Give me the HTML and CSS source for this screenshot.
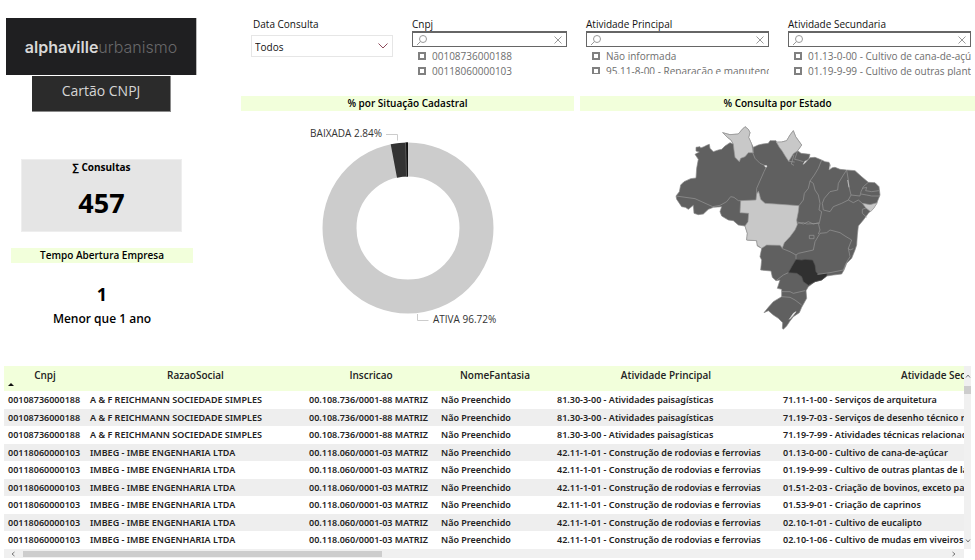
FILE: index.html
```html
<!DOCTYPE html>
<html lang="pt-BR">
<head>
<meta charset="utf-8">
<title>Cartão CNPJ</title>
<link rel="stylesheet" href="styles.css">
</head>
<body>
<svg class="defs" width="0" height="0" aria-hidden="true">
  <symbol id="lens" viewBox="0 0 12 12"><circle cx="7" cy="5" r="3.5"/><path d="M4.5 7.5 1 11"/></symbol>
  <symbol id="cross" viewBox="0 0 8 8"><path d="m.5.5 7 7m0-7-7 7"/></symbol>
</svg>
<div class="top">
  <aside class="side">
    <div class="logo"><strong>alphaville</strong><span>urbanismo</span></div>
    <h1 class="page-title">Cartão CNPJ</h1>
    <section class="card">
      <h2>∑ Consultas</h2>
      <p>457</p>
    </section>
    <section class="age">
      <h2 class="band">Tempo Abertura Empresa</h2>
      <p class="age-value">1</p>
      <p class="age-text">Menor que 1 ano</p>
    </section>
  </aside>
  <main class="content">
    <form class="filters">
      <div class="filter">
        <label for="data">Data Consulta</label>
        <div class="select">
          <select id="data"><option>Todos</option></select>
          <svg class="chevron" viewBox="0 0 10 6"><path d="m.5.5 4.5 4.5L9.5.5"/></svg>
        </div>
      </div>
      <div class="filter">
        <label for="cnpj">Cnpj</label>
        <div class="search">
          <svg class="lens"><use href="#lens"/></svg>
          <input id="cnpj" type="text">
          <button type="button" aria-label="Limpar"><svg><use href="#cross"/></svg></button>
        </div>
        <div class="options">
          <label><input type="checkbox">00108736000188</label>
          <label><input type="checkbox">00118060000103</label>
        </div>
      </div>
      <div class="filter">
        <label for="principal">Atividade Principal</label>
        <div class="search">
          <svg class="lens"><use href="#lens"/></svg>
          <input id="principal" type="text">
          <button type="button" aria-label="Limpar"><svg><use href="#cross"/></svg></button>
        </div>
        <div class="options options-short">
          <label><input type="checkbox">Não informada</label>
          <label><input type="checkbox">95.11-8-00 - Reparação e manutenção</label>
        </div>
      </div>
      <div class="filter">
        <label for="secundaria">Atividade Secundaria</label>
        <div class="search">
          <svg class="lens"><use href="#lens"/></svg>
          <input id="secundaria" type="text">
          <button type="button" aria-label="Limpar"><svg><use href="#cross"/></svg></button>
        </div>
        <div class="options">
          <label><input type="checkbox">01.13-0-00 - Cultivo de cana-de-açúcar</label>
          <label><input type="checkbox">01.19-9-99 - Cultivo de outras plantas</label>
        </div>
      </div>
    </form>
    <div class="charts">
      <section>
        <h2 class="band">% por Situação Cadastral</h2>
        <svg class="donut" viewBox="241 110 333 230">
          <circle cx="408" cy="228" r="68.5" fill="none" stroke="#ccc" stroke-width="34"/>
          <path fill="#333" d="M408 142.500A85.500 85.500 0 0 0 390.700 144.300L397 177.700A51.500 51.500 0 0 1 408 176.500Z"/>
          <path fill="#111" d="M408 142.500h-2l.8 34h1.200Z"/>
          <path fill="none" stroke="#666" stroke-width=".7" d="M405.500 142.500l1 34"/>
          <path fill="none" stroke="#ccc" d="M386 134.500h11.500v6M417.500 314v6.500h11"/>
          <text x="382" y="137" text-anchor="end">BAIXADA 2.84%</text>
          <text x="433" y="323">ATIVA 96.72%</text>
        </svg>
      </section>
      <section>
        <h2 class="band">% Consulta por Estado</h2>
        <svg class="map" viewBox="0 0 660 645">
          <path class="land" d="M18 228 28 215 32 195 42 185 62 176 78 174 80 145 85 118 75 103 88 96 78 93 78 82 90 80 92 84 102 80 110 76 118 73 120 85 130 95 145 90 155 88 165 78 180 68 190 72 183 60 172 52 158 38 180 44 205 42 215 30 225 20 235 28 240 38 236 52 245 72 250 82 265 75 278 72 295 70 300 62 318 62 320 67 335 66 350 62 360 45 370 32 377 50 395 75 383 92 393 100 420 103 416 118 404 124 400 133 405 130 420 113 435 112 455 120 465 125 477 127 481 136 477 150 487 143 495 142 510 148 530 150 555 152 575 170 595 187 615 188 627 200 630 225 620 250 610 265 595 280 580 300 565 318 562 345 560 375 555 390 545 415 530 430 522 450 515 462 490 465 470 468 455 480 435 485 415 500 408 512 410 535 395 562 388 578 370 590 360 603 350 618 340 628 337 625 338 608 325 595 310 585 295 572 282 578 295 562 310 545 335 530 335 508 322 505 330 480 318 482 307 472 303 453 272 450 275 420 270 410 275 385 262 378 260 362 230 360 232 340 225 318 205 315 190 302 175 300 155 288 150 275 155 260 130 262 115 268 100 282 85 284 72 280 70 256 55 268 46 262 35 260 20 238Z"/>
          <path class="low" d="M190 72 183 60 172 52 158 38 180 44 205 42 215 30 225 20 235 28 240 38 236 52 245 72 250 98 235 98 225 110 212 115 208 125 195 112 192 90ZM319 66 335 66 350 62 360 45 370 32 377 50 395 75 383 92 370 101 356 124 347 110 336 92 328 82ZM212 242 258 240 260 222 265 214 268 222 272 238 285 250 330 253 387 257 385 275 380 300 382 314 375 330 360 350 343 368 337 384 330 376 290 375 275 385 262 376 260 362 230 360 232 340 225 318 234 305 236 280 210 278ZM577 250 600 254 622 248 612 264 602 275 588 264Z"/>
          <path class="high" d="M378 418 395 420 405 418 428 420 435 435 438 455 445 463 472 459 470 468 455 480 435 485 415 496 400 485 395 470 380 460 355 458 365 440Z"/>
          <path class="line" d="M18 228 75 236 128 260 150 256 170 245 182 230 192 232 205 242 212 242M250 82 248 98 255 115 270 130 290 139 282 155 260 205 260 222M455 120 445 145 433 165 420 183 430 190 435 210 445 225 450 250 447 270 455 275 450 300 447 312M420 183 415 205 403 220 400 240 387 257M383 306 400 312 415 305 430 312 447 308M530 150 520 165 505 190 503 210 480 215 463 235 457 250 460 270 480 275 490 260 515 250 535 240M530 150 535 180 537 200 543 225 535 240M595 187 580 200 573 215 570 228 543 225M577 205 590 202 587 212 605 215 627 212M573 222 590 225 605 228 630 228M535 240 550 248 565 240 577 250M588 264 577 268 577 280 590 292M382 310 400 308 410 312 445 310 450 330 445 342M450 340 470 338 480 330 510 338 525 348 545 360 535 385 540 410 528 430 520 450 480 458 442 463M335 385 360 395 378 405 385 400 430 390 435 365 450 340M418 346h14v10h-14ZM378 405v13M355 458 340 465 318 482M335 515 360 515 370 520 405 512M335 530 360 532 375 540 395 555M535 385 540 390 550 386M372 104 364 132 372 136M383 92 374 118 384 120 400 125M356 124 374 126"/>
          <path class="water" d="M378 575 368 588 358 598 370 580ZM478 148l3-16M533 180l4 22M400 133l5-8M284 137h6v4h-4Z"/>
        </svg>
      </section>
    </div>
  </main>
</div>
<div class="grid">
  <div class="viewport">
    <table>
      <colgroup><col class="c-cnpj"><col class="c-razao"><col class="c-insc"><col class="c-nome"><col class="c-princ"><col class="c-sec"></colgroup>
      <thead>
        <tr><th class="sorted">Cnpj</th><th>RazaoSocial</th><th>Inscricao</th><th>NomeFantasia</th><th>Atividade Principal</th><th>Atividade Secundaria</th></tr>
      </thead>
      <tbody>
        <tr><td>00108736000188</td><td>A &amp; F REICHMANN SOCIEDADE SIMPLES</td><td>00.108.736/0001-88 MATRIZ</td><td>Não Preenchido</td><td>81.30-3-00 - Atividades paisagísticas</td><td>71.11-1-00 - Serviços de arquitetura</td></tr>
        <tr><td>00108736000188</td><td>A &amp; F REICHMANN SOCIEDADE SIMPLES</td><td>00.108.736/0001-88 MATRIZ</td><td>Não Preenchido</td><td>81.30-3-00 - Atividades paisagísticas</td><td>71.19-7-03 - Serviços de desenho técnico relacionados</td></tr>
        <tr><td>00108736000188</td><td>A &amp; F REICHMANN SOCIEDADE SIMPLES</td><td>00.108.736/0001-88 MATRIZ</td><td>Não Preenchido</td><td>81.30-3-00 - Atividades paisagísticas</td><td>71.19-7-99 - Atividades técnicas relacionadas</td></tr>
        <tr><td>00118060000103</td><td>IMBEG - IMBE ENGENHARIA LTDA</td><td>00.118.060/0001-03 MATRIZ</td><td>Não Preenchido</td><td>42.11-1-01 - Construção de rodovias e ferrovias</td><td>01.13-0-00 - Cultivo de cana-de-açúcar</td></tr>
        <tr><td>00118060000103</td><td>IMBEG - IMBE ENGENHARIA LTDA</td><td>00.118.060/0001-03 MATRIZ</td><td>Não Preenchido</td><td>42.11-1-01 - Construção de rodovias e ferrovias</td><td>01.19-9-99 - Cultivo de outras plantas de lavoura</td></tr>
        <tr><td>00118060000103</td><td>IMBEG - IMBE ENGENHARIA LTDA</td><td>00.118.060/0001-03 MATRIZ</td><td>Não Preenchido</td><td>42.11-1-01 - Construção de rodovias e ferrovias</td><td>01.51-2-03 - Criação de bovinos, exceto para corte</td></tr>
        <tr><td>00118060000103</td><td>IMBEG - IMBE ENGENHARIA LTDA</td><td>00.118.060/0001-03 MATRIZ</td><td>Não Preenchido</td><td>42.11-1-01 - Construção de rodovias e ferrovias</td><td>01.53-9-01 - Criação de caprinos</td></tr>
        <tr><td>00118060000103</td><td>IMBEG - IMBE ENGENHARIA LTDA</td><td>00.118.060/0001-03 MATRIZ</td><td>Não Preenchido</td><td>42.11-1-01 - Construção de rodovias e ferrovias</td><td>02.10-1-01 - Cultivo de eucalipto</td></tr>
        <tr><td>00118060000103</td><td>IMBEG - IMBE ENGENHARIA LTDA</td><td>00.118.060/0001-03 MATRIZ</td><td>Não Preenchido</td><td>42.11-1-01 - Construção de rodovias e ferrovias</td><td>02.10-1-06 - Cultivo de mudas em viveiros florestais</td></tr>
      </tbody>
    </table>
  </div>
  <div class="vbar">
    <svg viewBox="0 0 6 4"><path d="M1 3.500 3 1l2 2.500"/></svg>
    <i></i>
    <svg viewBox="0 0 6 4"><path d="M1 .5 3 3 5 .5"/></svg>
  </div>
  <div class="hbar">
    <svg viewBox="0 0 4 6"><path d="M3.500 1 1 3l2.500 2"/></svg>
    <span><i></i></span>
    <svg viewBox="0 0 4 6"><path d="M.5 1 3 3 .5 5"/></svg>
  </div>
</div>
</body>
</html>
```
FILE: styles.css
```css
* { box-sizing: border-box; }

body {
  margin: 0;
  background: #fff;
  color: #111;
  font: 10px/14px "Open Sans", "Noto Sans", sans-serif;
  overflow: hidden;
}

h1, h2, p { margin: 0; }
svg { display: block; }
.defs { position: absolute; }

.top {
  display: grid;
  grid-template-columns: 241px 1fr;
  height: 366px;
}

/* Sidebar */
.side {
  display: flex;
  flex-direction: column;
  padding: 18px 37px 0 6px;
}

.logo {
  display: flex;
  align-items: center;
  justify-content: center;
  align-self: flex-start;
  width: 191px;
  height: 57px;
  background: #1f1f21;
  border-right: 1px solid #bbb;
  font: 16px/20px Inter, sans-serif;
  color: #68686a;
}
.logo strong { color: #d8d8d8; font-weight: 600; }
.logo span { font-weight: 300; }

.page-title {
  width: 139px;
  margin: 1px 0 0 26px;
  background: #2b2b2b;
  border: solid #8a8a8a;
  border-width: 0 1px 1px 0;
  color: #d6d6d6;
  font-size: 14px;
  font-weight: 400;
  line-height: 30px;
  height: 36px;
  text-align: center;
}

.card {
  width: 161px;
  height: 73px;
  margin: 47px 0 0 15px;
  background: #e5e5e5;
  border: 1px solid #eee;
  text-align: center;
  color: #000;
}
.card h2 { font-size: 10px; font-weight: 700; line-height: 14px; }
.card p { margin-top: 11px; font-size: 27px; font-weight: 700; line-height: 36px; }

.age {
  width: 182px;
  margin: 16px 0 0 5px;
  text-align: center;
  color: #000;
}
.age-value { margin-top: 18px; font-size: 18px; font-weight: 700; line-height: 26px; }
.age-text { margin-top: 4px; font-size: 12px; font-weight: 600; line-height: 16px; }

.band {
  background: #f2ffdb;
  font-size: 10px;
  font-weight: 600;
  color: #000;
  line-height: 15px;
  text-align: center;
}

/* Filters */
.filters {
  display: grid;
  grid-template-columns: 142fr 155fr 183fr 183fr;
  gap: 19px;
  height: 96px;
  padding: 17px 4px 0 10px;
}
.filter { min-width: 0; }
.filter > label { display: block; line-height: 14px; }
.filter:first-child > label { padding-left: 2px; }

.select {
  display: flex;
  align-items: center;
  height: 22px;
  margin-top: 4px;
  padding-right: 4px;
  border: 1px solid #e6e6e6;
}
.select select {
  flex: 1;
  appearance: none;
  border: 0;
  padding: 2px 3px 0;
  background: none;
  font: inherit;
  color: #111;
}
.chevron { width: 10px; height: 6px; fill: none; stroke: #8d4a5a; }

.search {
  display: flex;
  align-items: center;
  height: 16px;
  border: 1px solid #666;
  border-width: 2px 1px 1px;
  padding: 0 4px 0 3px;
}
.search input {
  flex: 1;
  min-width: 0;
  height: 12px;
  border: 0;
  padding: 0 4px;
  background: none;
  font: inherit;
}
.search button { border: 0; padding: 0; background: none; }
.search svg { width: 8px; height: 8px; fill: none; stroke: #999; stroke-width: 1; }
.search .lens { width: 12px; height: 12px; }

.options { height: 28px; margin-top: 1px; overflow: hidden; }
.options-short { height: 26px; }
.options label {
  display: flex;
  align-items: center;
  height: 15px;
  padding-left: 6px;
  color: #6e6e6e;
  white-space: nowrap;
}
.options input {
  flex: none;
  appearance: none;
  width: 8px;
  height: 8px;
  margin: 0 6px 0 0;
  border: 2px solid #808080;
}

/* Charts */
.charts {
  display: grid;
  grid-template-columns: 333fr 395fr;
  gap: 6px;
}
.donut { width: 100%; height: 230px; margin-top: -1px; }
.donut text { font-size: 10px; fill: #333; }
.map { width: 220px; height: 215px; margin: 9px auto 0; padding-left: 4px; box-sizing: content-box; }
.land { fill: #606060; stroke: #8a8a8a; stroke-width: 2; }
.low { fill: #c8c8c8; stroke: #999; stroke-width: 2; }
.high { fill: #303030; stroke: #555; stroke-width: 2; }
.line { fill: none; stroke: #999; stroke-width: 2; stroke-linejoin: round; }
.water { fill: #fff; stroke: #ddd; stroke-width: 2; }

/* Data grid */
.grid {
  display: grid;
  grid-template-columns: 1fr 7px;
  grid-template-rows: auto 9px;
  margin: 0 4px;
}
.viewport { overflow: hidden; }

table {
  width: 1121px;
  table-layout: fixed;
  border-collapse: collapse;
  color: #222;
}
.c-cnpj { width: 82px; }
.c-razao { width: 219px; }
.c-insc { width: 132px; }
.c-nome { width: 116px; }
.c-princ { width: 226px; }
.c-sec { width: 346px; }

th {
  height: 25px;
  padding: 2px 0 0;
  background: #f2ffdb;
  font-size: 10px;
  font-weight: 600;
  line-height: 14px;
  vertical-align: top;
}
.sorted { position: relative; }
.sorted::after {
  content: "";
  position: absolute;
  left: 4px;
  bottom: 5px;
  border: solid transparent;
  border-width: 0 3px 3px;
  border-bottom-color: #111;
}
td {
  height: 18px;
  padding: 0 4px;
  font-family: "Noto Sans", "Open Sans", sans-serif;
  font-size: 9px;
  font-weight: 600;
  line-height: 16px;
  white-space: nowrap;
}
tr:nth-child(even) td { height: 17px; background: #eee; }

.vbar, .hbar { display: flex; background: #f0f0f0; }
.vbar { flex-direction: column; align-items: center; padding: 8px 0 6px; }
.vbar i { width: 7px; height: 8px; margin: 8px 0 auto; background: #cdcdcd; }
.hbar { align-items: center; padding: 0 8px 0 7px; }
.hbar span { flex: 1; margin: 0 8px; }
.hbar i { display: block; width: 39%; height: 6px; background: #cdcdcd; }
.vbar svg { width: 6px; height: 4px; }
.hbar svg { width: 4px; height: 6px; }
.vbar svg, .hbar svg { fill: none; stroke: #777; }
```
